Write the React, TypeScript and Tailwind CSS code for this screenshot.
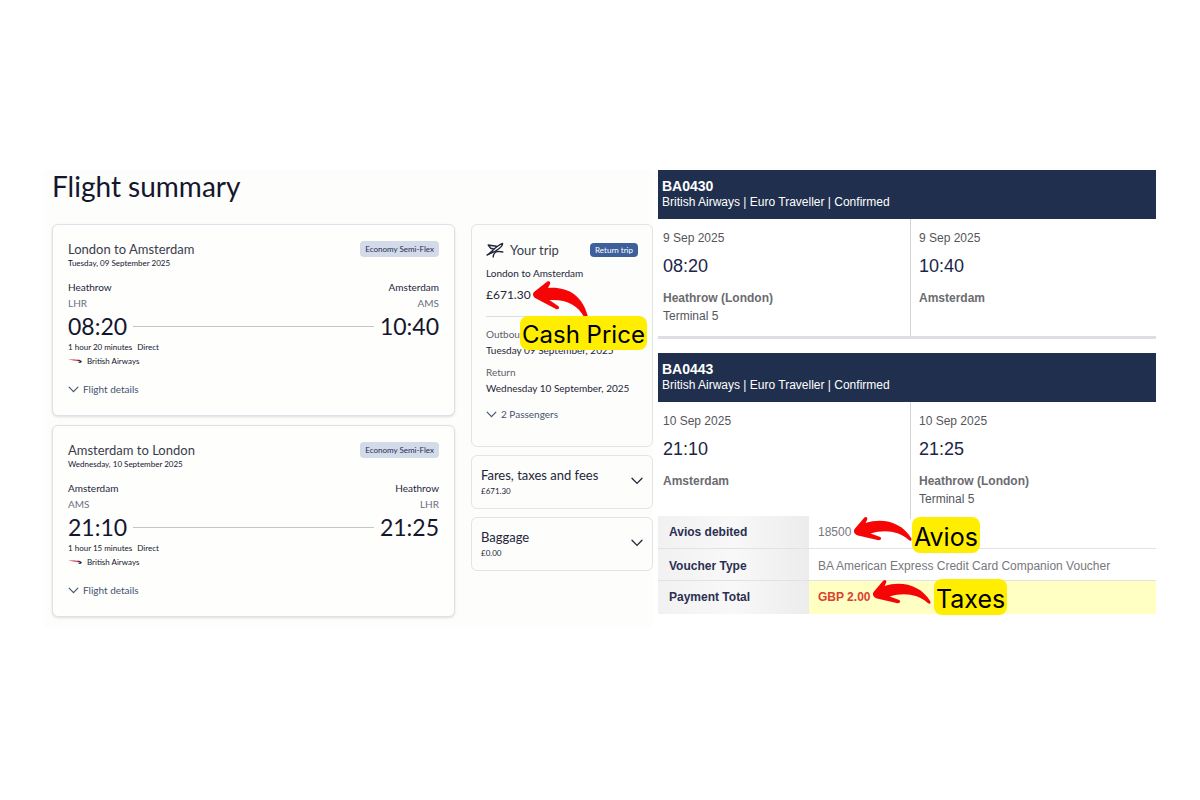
type Flight = {
  title: string;
  date: string;
  from: string;
  fromCode: string;
  departs: string;
  to: string;
  toCode: string;
  arrives: string;
  duration: string;
};

type Stop = { date: string; time: string; place: string; terminal?: string };

const flights: Flight[] = [
  {
    title: "London to Amsterdam",
    date: "Tuesday, 09 September 2025",
    from: "Heathrow",
    fromCode: "LHR",
    departs: "08:20",
    to: "Amsterdam",
    toCode: "AMS",
    arrives: "10:40",
    duration: "1 hour 20 minutes",
  },
  {
    title: "Amsterdam to London",
    date: "Wednesday, 10 September 2025",
    from: "Amsterdam",
    fromCode: "AMS",
    departs: "21:10",
    to: "Heathrow",
    toCode: "LHR",
    arrives: "21:25",
    duration: "1 hour 15 minutes",
  },
];

const Chevron = ({ className }: { className: string }) => (
  <svg viewBox="0 0 12 8" fill="none" stroke="currentColor" className={className}>
    <path d="M1 1.2L6 6.4L11 1.2" strokeWidth={1.3} strokeLinecap="round" />
  </svg>
);

const Speedmarque = () => (
  <svg viewBox="0 0 14 5" className="h-[5px] w-[14px]">
    <path d="M0 0.6C4 0.3 9 0.4 12 1L11 2.4C8 1.7 4 1.6 0 0.6Z" fill="#c8202f" />
    <path d="M10 0.8C13 1.1 14.2 2 13.7 2.9C13.2 3.8 11.5 4 9.4 4.1C11.4 3.4 12.2 2.7 11.2 2.1Z" fill="#1d2b5c" />
  </svg>
);

const PlaneIcon = () => (
  <svg
    viewBox="0 0 18 16"
    fill="none"
    stroke="#23263a"
    strokeWidth={1.4}
    strokeLinecap="round"
    strokeLinejoin="round"
    className="h-4 w-[18px]"
  >
    <path d="M1 13C5.4 10.6 9.6 4 16.6 1.4C16.8 4.2 13.4 6.8 9.4 9.2L1 13Z" />
    <path d="M10.4 4.2L2.2 3L4.6 6.2L7 6.8" />
    <path d="M7.2 15C7.4 12 9 9.8 12 9.4L16.8 10" />
  </svg>
);

const SteepArrow = ({ className }: { className: string }) => (
  <svg viewBox="0 0 58 40" className={className}>
    <path
      d="M1 11L14 0.8C16 -0.4 17.8 1 17 3L15 7C34 5.6 50 13.6 55.4 37.4C54.6 39.8 52.6 39.6 51.6 37C45 23.6 33 18 16.4 19L25.4 25.2C27 27 25.8 28.8 23 28L3 17.6C-0.2 15.8 -0.8 13 1 11Z"
      fill="#f50505"
    />
  </svg>
);

const FlatArrow = ({ className }: { className: string }) => (
  <svg viewBox="0 0 60 28" className={className}>
    <path
      d="M1.6 13L11.4 1.6C13 0.2 15 1.4 14.2 3.4L12.6 7C30 1.4 49 6.4 58.4 22.4C59 24.6 57.6 25.6 55.8 24C45 14.6 31 13.4 17.6 17.6L27.2 21C29 22.4 28 24.2 25.6 24.2L5 19.4C1.4 18.4 0 15.4 1.6 13Z"
      fill="#f50505"
    />
  </svg>
);

const FlightCard = ({ flight }: { flight: Flight }) => (
  <article className="rounded-md border border-[#dfe1ea] bg-[#fefefd] px-[15px] pt-4 pb-[18px] shadow-sm">
    <div className="flex items-start justify-between">
      <div>
        <h2 className="text-[13px] leading-4 text-[#3a3d4a]">{flight.title}</h2>
        <p className="text-[8px] leading-3 text-[#14152e]">{flight.date}</p>
      </div>
      <span className="rounded bg-[#d3dae8] px-[5px] text-[8px] leading-4 text-[#1f2d57]">Economy Semi-Flex</span>
    </div>
    <div className="mt-[10px] flex justify-between text-[10px] leading-4">
      <div>
        <p className="text-[#23263a]">{flight.from}</p>
        <p className="text-[#6c6f7c]">{flight.fromCode}</p>
      </div>
      <div className="text-right">
        <p className="text-[#23263a]">{flight.to}</p>
        <p className="text-[#6c6f7c]">{flight.toCode}</p>
      </div>
    </div>
    <div className="flex items-center gap-[6px] text-[23px] leading-[30px] text-[#14152e]">
      <span>{flight.departs}</span>
      <span className="h-px flex-1 bg-[#c3c5cb]" />
      <span>{flight.arrives}</span>
    </div>
    <p className="flex gap-[5px] text-[8px] leading-3 text-[#14152e]">
      <span>{flight.duration}</span>
      <span>Direct</span>
    </p>
    <p className="flex items-center gap-[5px] text-[8px] leading-4 text-[#14152e]">
      <Speedmarque />
      British Airways
    </p>
    <button className="mt-3 flex items-center gap-1 text-[10px] leading-4 text-[#46536f]">
      <Chevron className="h-[7px] w-[11px]" />
      Flight details
    </button>
  </article>
);

const TripCard = () => (
  <article className="relative rounded-md border border-[#e3e4e8] px-[14px] pt-[15px] pb-6 text-[10px] leading-4 text-[#23263a]">
    <div className="flex items-center justify-between leading-5">
      <h2 className="flex items-center gap-[6px] text-[13px] text-[#3a3d4a]">
        <PlaneIcon />
        Your trip
      </h2>
      <span className="rounded bg-[#3d5f9c] px-[5px] text-[8px] leading-[14px] text-white">Return trip</span>
    </div>
    <p className="mt-[5px]">London to Amsterdam</p>
    <p className="mt-1 text-xs leading-5">£671.30</p>
    <hr className="mt-[11px] border-[#dcdde0]" />
    <p className="mt-[9px] text-[#5d606c]">Outbound</p>
    <p>Tuesday 09 September, 2025</p>
    <p className="mt-[6px] text-[#5d606c]">Return</p>
    <p>Wednesday 10 September, 2025</p>
    <button className="mt-[10px] flex items-center gap-1 text-[#46536f]">
      <Chevron className="h-[7px] w-[11px]" />
      2 Passengers
    </button>
    <SteepArrow className="absolute top-14 left-[61px] h-10 w-[58px]" />
    <span className="absolute top-[91px] left-[48px] rounded-lg bg-[#ffee00] px-[2px] pt-[3px] font-['Inter',sans-serif] text-2xl leading-[31px] whitespace-nowrap text-black">
      Cash Price
    </span>
  </article>
);

const PriceRow = ({ label, price }: { label: string; price: string }) => (
  <button className="flex items-center justify-between rounded-md border border-[#e3e4e8] px-[9px] pt-[9px] pb-[11px] text-left text-[#23263a]">
    <span>
      <span className="block text-[13px] leading-5">{label}</span>
      <span className="block text-[8px] leading-3">{price}</span>
    </span>
    <Chevron className="h-2 w-3" />
  </button>
);

const StopCell = ({ stop, className }: { stop: Stop; className: string }) => (
  <div className={className}>
    <p className="leading-5">{stop.date}</p>
    <p className="mt-[6px] text-lg leading-6 text-[#1b2547]">{stop.time}</p>
    <p className="mt-[11px] leading-[18px] font-bold text-[#6b6b70]">{stop.place}</p>
    <p className="leading-[18px]">{stop.terminal}</p>
  </div>
);

const Segment = ({ code, from, to }: { code: string; from: Stop; to: Stop }) => (
  <section>
    <header className="bg-[#1f2f4d] px-1 pt-2 pb-[9px] text-xs leading-4 text-white">
      <h2 className="text-sm leading-4 font-bold">{code}</h2>
      <p>British Airways | Euro Traveller | Confirmed</p>
    </header>
    <div className="grid min-h-[117px] grid-cols-[252fr_246fr] text-xs text-[#55565c]">
      <StopCell stop={from} className="px-[5px] pt-[9px]" />
      <StopCell stop={to} className="border-l border-[#d2d3d8] px-2 pt-[9px]" />
    </div>
  </section>
);

const labelCell =
  "w-[151px] bg-linear-to-r from-[#f1f1f2] via-[#f8f8f9] to-[#ececed] pl-[11px] text-left font-bold text-[#2a3050]";
const noteLabel =
  "absolute rounded-lg bg-[#ffee00] px-[2px] pt-1 font-['Inter',sans-serif] text-[25px] leading-8 font-normal text-black";

const PaymentTable = () => (
  <table className="-mt-[3px] w-full border-collapse bg-white text-xs text-[#77787e]">
    <tbody>
      <tr className="h-8 border-b border-[#e2e2e4]">
        <th scope="row" className={labelCell}>
          Avios debited
        </th>
        <td className="relative pl-[9px]">
          18500
          <FlatArrow className="absolute top-0 left-11 h-7 w-[60px]" />
          <span className={`${noteLabel} top-px left-[103px]`}>Avios</span>
        </td>
      </tr>
      <tr className="h-8 border-b border-[#e2e2e4]">
        <th scope="row" className={`${labelCell} pt-1`}>
          Voucher Type
        </th>
        <td className="pt-1 pl-[9px]">BA American Express Credit Card Companion Voucher</td>
      </tr>
      <tr className="h-[34px]">
        <th scope="row" className={labelCell}>
          Payment Total
        </th>
        <td className="relative bg-[#ffffc4] pl-[9px] font-bold text-[#d8432f]">
          GBP 2.00
          <FlatArrow className="absolute -top-[2px] left-[63px] h-7 w-[60px]" />
          <span className={`${noteLabel} -top-[2px] left-[125px]`}>Taxes</span>
        </td>
      </tr>
    </tbody>
  </table>
);

export default function App() {
  return (
    <main className="grid grid-cols-[609fr_498fr] items-start gap-[5px] bg-white px-11 pt-[170px] pb-10">
      <section className="bg-[#fdfdfb] pb-[10px] pl-2 font-['Lato',sans-serif]">
        <h1 className="text-[28px] leading-8 text-[#14152e]">Flight summary</h1>
        <div className="mt-[22px] grid grid-cols-[403fr_182fr] items-start gap-4">
          <div className="flex flex-col gap-[9px]">
            {flights.map((flight) => (
              <FlightCard key={flight.title} flight={flight} />
            ))}
          </div>
          <div className="flex flex-col gap-2">
            <TripCard />
            <PriceRow label="Fares, taxes and fees" price="£671.30" />
            <PriceRow label="Baggage" price="£0.00" />
          </div>
        </div>
      </section>
      <section className="font-['Liberation_Sans',Arial,sans-serif]">
        <Segment
          code="BA0430"
          from={{ date: "9 Sep 2025", time: "08:20", place: "Heathrow (London)", terminal: "Terminal 5" }}
          to={{ date: "9 Sep 2025", time: "10:40", place: "Amsterdam" }}
        />
        <hr className="mb-[14px] border-t-[3px] border-[#dddde4]" />
        <Segment
          code="BA0443"
          from={{ date: "10 Sep 2025", time: "21:10", place: "Amsterdam" }}
          to={{ date: "10 Sep 2025", time: "21:25", place: "Heathrow (London)", terminal: "Terminal 5" }}
        />
        <PaymentTable />
      </section>
    </main>
  );
}
